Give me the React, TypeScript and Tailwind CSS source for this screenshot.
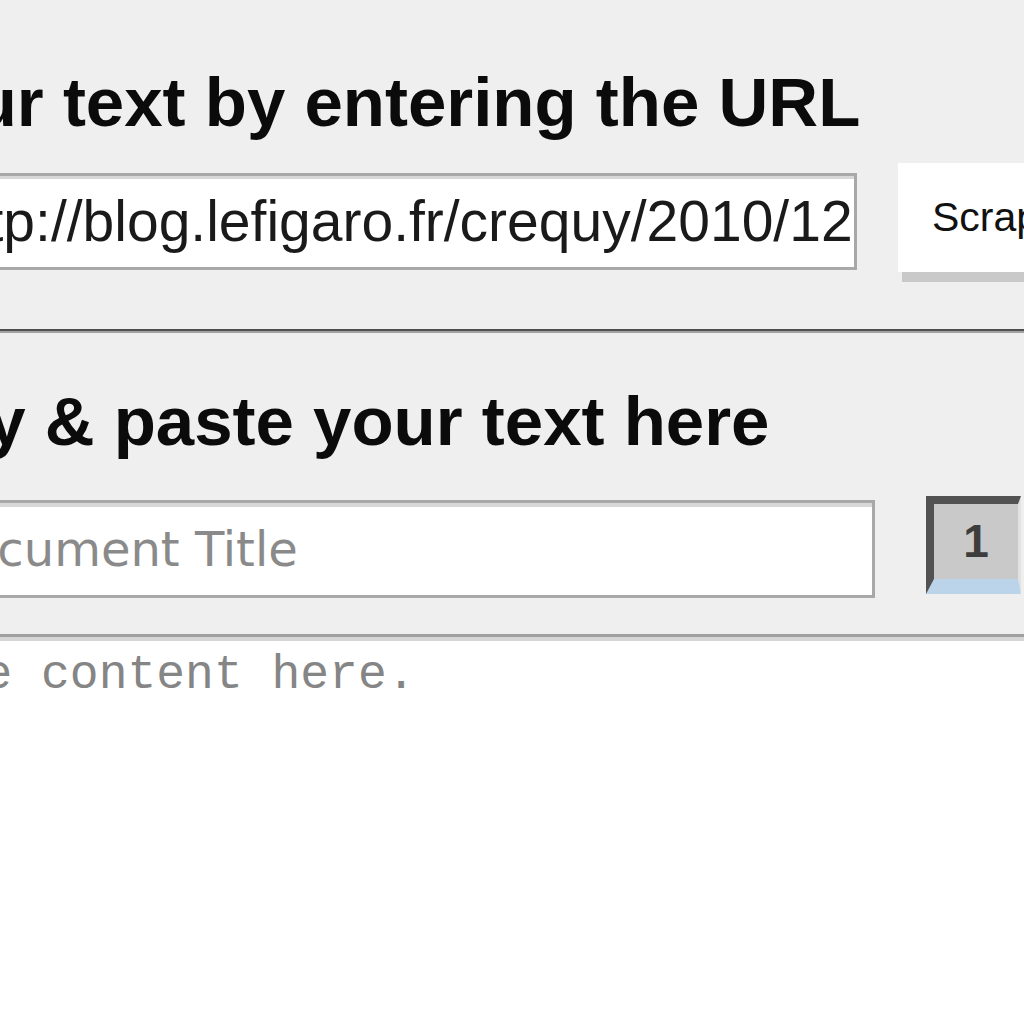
export default function App() {
  return (
    <div className="w-[1024px] h-[1024px] overflow-hidden bg-[#efefef] flex flex-col font-['Liberation_Sans',sans-serif]">
      {/* url section */}
      <h1 className="mt-[68px] ml-[-240px] whitespace-nowrap text-[69px] leading-[69px] font-bold text-[#0b0b0b]">
        Get your text by entering the URL
      </h1>
      <div className="mt-[26px] flex items-start h-[119px] shrink-0">
        <div className="mt-[10px] ml-[-70px] w-[927px] h-[97px] shrink-0 bg-white border-[3px] border-[#a8a8a8] shadow-[inset_0_3px_0_#d8d8d8] flex items-center pl-[7px] overflow-hidden whitespace-nowrap text-[57px] text-[#1a1a1a]">
          http://blog.lefigaro.fr/crequy/2010/12
        </div>
        <button className="ml-[41px] w-[160px] h-[109px] shrink-0 bg-white shadow-[4px_10px_0_#c9c9c9] flex items-center pl-[34px] text-[41px] text-[#111] whitespace-nowrap overflow-hidden">
          Scrape
        </button>
      </div>
      <div className="mt-[47px] h-[4px] shrink-0 border-t-2 border-t-[#4f4f4f] border-b-2 border-b-[#a3a3a3]" />

      {/* paste section */}
      <h2 className="mt-[54px] ml-[-147px] whitespace-nowrap text-[69px] leading-[69px] font-bold text-[#0b0b0b]">
        Copy &amp; paste your text here
      </h2>
      <div className="mt-[40px] flex items-start h-[102px] shrink-0">
        <div className="mt-[4px] ml-[-80px] w-[955px] h-[98px] shrink-0 bg-white border-[3px] border-[#a8a8a8] shadow-[inset_0_4px_0_#d8d8d8] flex items-center pl-[8px] overflow-hidden whitespace-nowrap font-['DejaVu_Sans',sans-serif] text-[48px] text-[#8a8a8a]">
          Document Title
        </div>
        <button className="ml-[51px] w-[95px] h-[98px] shrink-0 bg-[#c9c9c9] border-t-[8px] border-l-[8px] border-t-[#525252] border-l-[#525252] border-b-[15px] border-b-[#bcd4e9] border-r-[3px] border-r-[#e2e2e2] flex items-center justify-center text-[46px] font-bold text-[#3d3d3d]">
          1
        </button>
      </div>
      <div className="mt-[36px] flex-1 bg-white border-t-[3px] border-t-[#a0a0a0] shadow-[inset_0_4px_0_#d6d6d6] pt-[14px] overflow-hidden">
        <div className="ml-[-247px] whitespace-nowrap font-['Liberation_Mono',monospace] text-[48px] leading-[48px] text-[#858585]">
          Paste the content here.
        </div>
      </div>
    </div>
  );
}
